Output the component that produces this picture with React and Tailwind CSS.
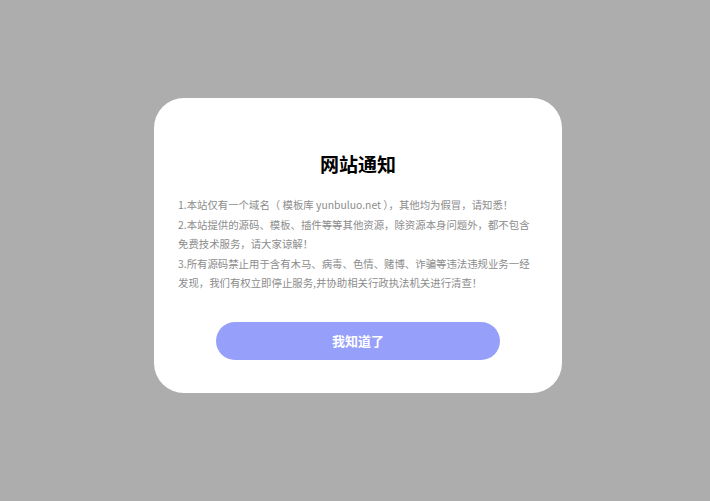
export default function App() {
  const lines = [
    "1.本站仅有一个域名（ 模板库 yunbuluo.net ），其他均为假冒，请知悉！",
    "2.本站提供的源码、模板、插件等等其他资源，除资源本身问题外，都不包含",
    "免费技术服务，请大家谅解！",
    "3.所有源码禁止用于含有木马、病毒、色情、赌博、诈骗等违法违规业务一经",
    "发现，我们有权立即停止服务,并协助相关行政执法机关进行清查！",
  ]

  return (
    <main
      className="flex min-h-screen items-center justify-center bg-[#adadad] pb-[10px] pl-[6px]"
      style={{ fontFamily: '"Microsoft YaHei", "Noto Sans CJK SC", "Noto Sans", sans-serif' }}
    >
      <section className="w-[408px] rounded-[30px] bg-white px-6 pt-[53px] pb-[33px]">
        <h1 className="text-center text-[19px] font-bold leading-[26px] text-black">网站通知</h1>
        <div className="mt-[18px] text-[10.4px] leading-[19.5px] text-[#8c8c8c]">
          {lines.map((line) => (
            <p key={line} className="whitespace-pre">
              {line}
            </p>
          ))}
        </div>
        <button
          type="button"
          className="mx-auto mt-[29px] block h-[38px] w-[284px] rounded-full bg-[#96a0fb] text-[13px] font-bold text-white"
        >
          我知道了
        </button>
      </section>
    </main>
  )
}
